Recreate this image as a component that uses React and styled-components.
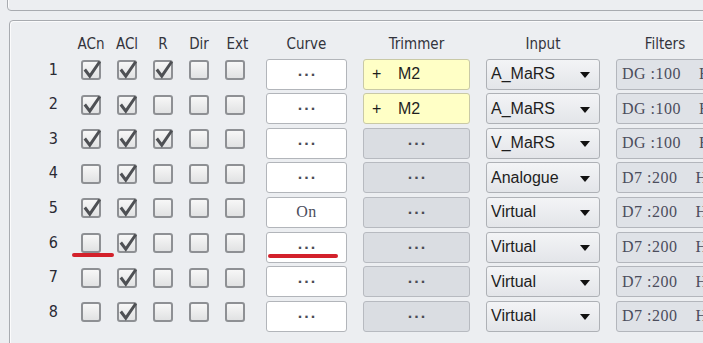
import React from "react";
import styled, { createGlobalStyle } from "styled-components";

const GlobalStyle = createGlobalStyle`
  html, body {
    margin: 0;
    padding: 0;
    background: #eceef1;
    overflow: hidden;
  }
  body {
    font-family: "DejaVu Sans Condensed", "DejaVu Sans", sans-serif;
    font-stretch: condensed;
    color: #2e2e36;
  }
`;

const Page = styled.div`
  width: 703px;
  height: 343px;
  overflow: hidden;
`;

const TopPanel = styled.div`
  box-sizing: border-box;
  margin: -20px -60px 0 7px;
  height: 31px;
  border: 1px solid #a8abb0;
  border-radius: 4px;
  box-shadow: inset 1px 1px 0 #fbfbfc;
`;

const MainPanel = styled.div`
  box-sizing: border-box;
  margin: 9px -80px 0 9px;
  height: 400px;
  border: 1px solid #a8abb0;
  border-radius: 4px;
  box-shadow: inset 1px 1px 0 #fbfbfc;
  padding: 14px 0 0 0;
`;

const Table = styled.div`
  display: flex;
  flex-direction: column;
  gap: 3.6px;
`;

const cols = `55px 20px 20px 20px 20px 25px 81px 107px 114px 98px`;

const Row = styled.div`
  display: grid;
  grid-template-columns: ${cols};
  column-gap: 16px;
  height: ${(p) => (p.$header ? "20px" : "31px")};
`;

const HeadLabel = styled.div`
  justify-self: center;
  font-size: 15px;
  line-height: 18px;
  color: #33343c;
  white-space: nowrap;
`;

const Num = styled.div`
  justify-self: end;
  padding-right: 7px;
  font-size: 16px;
  line-height: 22px;
  color: #2a2a34;
`;

const CheckCell = styled.div`
  position: relative;
  margin-top: 1.5px;
`;

const Box = styled.div`
  box-sizing: border-box;
  width: 20px;
  height: 20px;
  border: 2px solid #8e9094;
  border-radius: 3px;
  background: linear-gradient(#f7f7f7, #e1e2e3);
  position: relative;
`;

const Tick = styled.svg`
  position: absolute;
  left: -2px;
  top: -2px;
  overflow: visible;
`;

const Underline = styled.div`
  position: absolute;
  left: ${(p) => p.$left}px;
  top: ${(p) => p.$top}px;
  width: ${(p) => p.$width}px;
  height: 4px;
  border-radius: 2px;
  background: #d3212b;
`;

const Field = styled.div`
  position: relative;
  box-sizing: border-box;
  height: 31px;
  border: 1px solid ${(p) => p.$border || "#b2b5ba"};
  border-radius: 3px;
  background: ${(p) => p.$bg || "#fff"};
  display: flex;
  align-items: center;
  justify-content: ${(p) => (p.$start ? "flex-start" : "center")};
  font-family: "Liberation Sans", Arial, sans-serif;
  font-stretch: normal;
  font-size: 16px;
  color: #1e1e1e;
  overflow: hidden;
  white-space: nowrap;
`;

const Dots = styled.span`
  font-family: "DejaVu Sans", sans-serif;
  font-stretch: normal;
  font-weight: bold;
  font-size: 13px;
  letter-spacing: 1.5px;
  color: #4a4c55;
  padding-left: 1.5px;
`;

const OddText = styled.span`
  font-family: "Liberation Serif", serif;
  font-size: 16px;
  color: #4b4d5c;
  letter-spacing: 0.5px;
`;

const Plus = styled.span`
  padding-left: 8px;
  width: 26px;
`;

const Select = styled(Field)`
  justify-content: space-between;
  padding: 0 9px 0 4px;
  background: linear-gradient(#f3f4f6, #e3e5e9);
  border-color: #aeb1b6;
`;

const Arrow = styled.span`
  width: 0;
  height: 0;
  border-left: 5.5px solid transparent;
  border-right: 5.5px solid transparent;
  border-top: 6px solid #111;
  margin-top: 2px;
`;

const FilterBox = styled(Field)`
  justify-content: flex-start;
  padding-left: 5px;
  background: #dfe2e7;
  border-color: #b3b6bc;
  gap: 18px;
`;

const rows = [
  { n: 1, c: [1, 1, 1, 0, 0], curve: "...", trim: "M2", input: "A_MaRS", f: "DG :100" },
  { n: 2, c: [1, 1, 0, 0, 0], curve: "...", trim: "M2", input: "A_MaRS", f: "DG :100" },
  { n: 3, c: [1, 1, 1, 0, 0], curve: "...", trim: null, input: "V_MaRS", f: "DG :100" },
  { n: 4, c: [0, 1, 0, 0, 0], curve: "...", trim: null, input: "Analogue", f: "D7 :200" },
  { n: 5, c: [1, 1, 0, 0, 0], curve: "On", trim: null, input: "Virtual", f: "D7 :200" },
  { n: 6, c: [0, 1, 0, 0, 0], curve: "...", trim: null, input: "Virtual", f: "D7 :200", mark: true },
  { n: 7, c: [0, 1, 0, 0, 0], curve: "...", trim: null, input: "Virtual", f: "D7 :200" },
  { n: 8, c: [0, 1, 0, 0, 0], curve: "...", trim: null, input: "Virtual", f: "D7 :200" },
];

function Check({ on }) {
  return (
    <Box>
      {on ? (
        <Tick width="20" height="20" viewBox="0 0 20 20">
          <path d="M3.8 9.5 L8.8 16.2 L18.8 1.5" fill="none" stroke="#4e5054" strokeWidth="3" strokeLinejoin="miter" />
        </Tick>
      ) : null}
    </Box>
  );
}

export default function App() {
  return (
    <Page>
      <GlobalStyle />
      <TopPanel />
      <MainPanel>
        <Table>
          <Row $header>
            <div />
            <HeadLabel>ACn</HeadLabel>
            <HeadLabel>ACl</HeadLabel>
            <HeadLabel>R</HeadLabel>
            <HeadLabel>Dir</HeadLabel>
            <HeadLabel>Ext</HeadLabel>
            <HeadLabel>Curve</HeadLabel>
            <HeadLabel>Trimmer</HeadLabel>
            <HeadLabel>Input</HeadLabel>
            <HeadLabel>Filters</HeadLabel>
          </Row>
          {rows.map((r) => (
            <Row key={r.n}>
              <Num>{r.n}</Num>
              {r.c.map((v, i) => (
                <CheckCell key={i}>
                  <Check on={v} />
                  {r.mark && i === 0 ? <Underline $left={-9} $top={19.5} $width={42} /> : null}
                </CheckCell>
              ))}
              <Field>
                {r.curve === "On" ? <OddText>On</OddText> : <Dots>···</Dots>}
                {r.mark ? <Underline $left={1} $top={21.5} $width={70} /> : null}
              </Field>
              {r.trim ? (
                <Field $bg="#ffffc6" $border="#c9c9a6" $start>
                  <Plus>+</Plus>
                  <span>{r.trim}</span>
                </Field>
              ) : (
                <Field $bg="#dadde2" $border="#b7bac0">
                  <Dots>···</Dots>
                </Field>
              )}
              <Select>
                <span>{r.input}</span>
                <Arrow />
              </Select>
              <FilterBox>
                <OddText>{r.f}</OddText>
                <OddText>H</OddText>
              </FilterBox>
            </Row>
          ))}
        </Table>
      </MainPanel>
    </Page>
  );
}
